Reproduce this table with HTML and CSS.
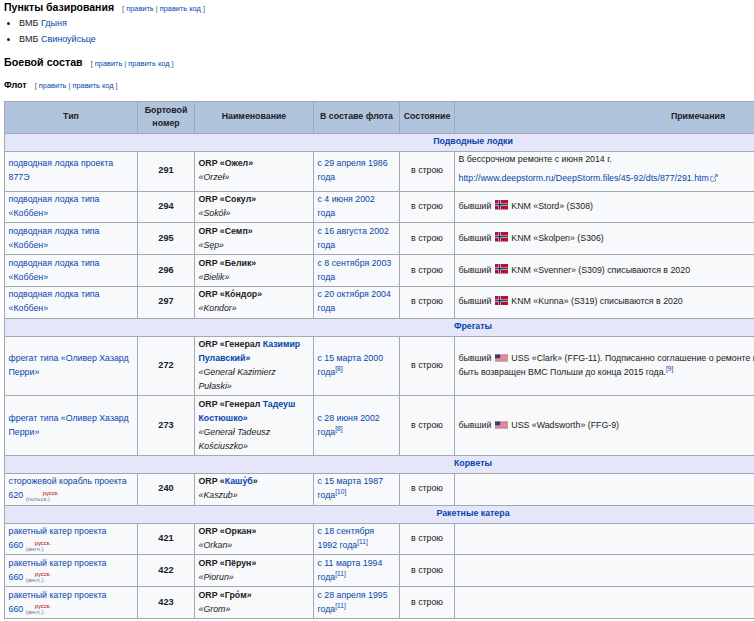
FILE: index.html
```html
<!DOCTYPE html>
<html lang="ru">
<head>
<meta charset="utf-8">
<title>Боевой состав</title>
<link rel="stylesheet" href="styles.css">
</head>
<body>
<h3 class="h3">Пункты базирования<span class="edit">[ <a href="#">править</a> | <a href="#">править код</a> ]</span></h3>
<ul class="bases">
  <li>ВМБ <a href="#">Гдыня</a></li>
  <li>ВМБ <a href="#">Свиноуйсьце</a></li>
</ul>
<h2 class="h2">Боевой состав<span class="edit">[ <a href="#">править</a> | <a href="#">править код</a> ]</span></h2>
<h4 class="h4">Флот<span class="edit">[ <a href="#">править</a> | <a href="#">править код</a> ]</span></h4>

<table class="fleet">
  <colgroup>
    <col class="c-type"><col class="c-num"><col class="c-name"><col class="c-date"><col class="c-state"><col class="c-note">
  </colgroup>
  <thead>
    <tr><th>Тип</th><th>Бортовой номер</th><th>Наименование</th><th class="nowrap">В составе флота</th><th>Состояние</th><th>Примечания</th></tr>
  </thead>
  <tbody>
    <tr class="group"><td colspan="6"><a href="#">Подводные лодки</a></td></tr>
    <tr>
      <td><a href="#">подводная лодка проекта 877Э</a></td>
      <td class="num">291</td>
      <td><b>ORP «Ожел»</b><br><i>«Orzeł»</i></td>
      <td class="date"><a href="#">с 29 апреля 1986 года</a></td>
      <td class="state">в строю</td>
      <td class="note"><p class="p1">В бессрочном ремонте с июня 2014 г.</p><p class="p2"><a href="#" class="ext">http://www.deepstorm.ru/DeepStorm.files/45-92/dts/877/291.htm<svg class="exticon" viewBox="0 0 10 10" width="8" height="8"><path d="M1 3h3M1 3v6h6V6" fill="none" stroke="#7a8aa8" stroke-width="1.1"/><path d="M4.5 5.5L9 1M6 1h3v3" fill="none" stroke="#3366cc" stroke-width="1.1"/></svg></a></p></td>
    </tr>
    <tr>
      <td><a href="#">подводная лодка типа «Коббен»</a></td>
      <td class="num">294</td>
      <td><b>ORP «Сокул»</b><br><i>«Sokół»</i></td>
      <td class="date"><a href="#">с 4 июня 2002 года</a></td>
      <td class="state">в строю</td>
      <td class="note">бывший <svg class="flag" viewBox="0 0 22 16" width="13" height="9.5"><rect width="22" height="16" fill="#ba0c2f"/><rect x="6" width="4" height="16" fill="#fff"/><rect y="6" width="22" height="4" fill="#fff"/><rect x="7" width="2" height="16" fill="#00205b"/><rect y="7" width="22" height="2" fill="#00205b"/></svg> KNM «Stord» (S308)</td>
    </tr>
    <tr>
      <td><a href="#">подводная лодка типа «Коббен»</a></td>
      <td class="num">295</td>
      <td><b>ORP «Семп»</b><br><i>«Sęp»</i></td>
      <td class="date"><a href="#">с 16 августа 2002 года</a></td>
      <td class="state">в строю</td>
      <td class="note">бывший <svg class="flag" viewBox="0 0 22 16" width="13" height="9.5"><rect width="22" height="16" fill="#ba0c2f"/><rect x="6" width="4" height="16" fill="#fff"/><rect y="6" width="22" height="4" fill="#fff"/><rect x="7" width="2" height="16" fill="#00205b"/><rect y="7" width="22" height="2" fill="#00205b"/></svg> KNM «Skolpen» (S306)</td>
    </tr>
    <tr>
      <td><a href="#">подводная лодка типа «Коббен»</a></td>
      <td class="num">296</td>
      <td><b>ORP «Белик»</b><br><i>«Bielik»</i></td>
      <td class="date"><a href="#">с 8 сентября 2003 года</a></td>
      <td class="state">в строю</td>
      <td class="note">бывший <svg class="flag" viewBox="0 0 22 16" width="13" height="9.5"><rect width="22" height="16" fill="#ba0c2f"/><rect x="6" width="4" height="16" fill="#fff"/><rect y="6" width="22" height="4" fill="#fff"/><rect x="7" width="2" height="16" fill="#00205b"/><rect y="7" width="22" height="2" fill="#00205b"/></svg> KNM «Svenner» (S309) списываются в 2020</td>
    </tr>
    <tr>
      <td><a href="#">подводная лодка типа «Коббен»</a></td>
      <td class="num">297</td>
      <td><b>ORP «Ко́ндор»</b><br><i>«Kondor»</i></td>
      <td class="date"><a href="#">с 20 октября 2004 года</a></td>
      <td class="state">в строю</td>
      <td class="note">бывший <svg class="flag" viewBox="0 0 22 16" width="13" height="9.5"><rect width="22" height="16" fill="#ba0c2f"/><rect x="6" width="4" height="16" fill="#fff"/><rect y="6" width="22" height="4" fill="#fff"/><rect x="7" width="2" height="16" fill="#00205b"/><rect y="7" width="22" height="2" fill="#00205b"/></svg> KNM «Kunna» (S319) списываются в 2020</td>
    </tr>
    <tr class="group"><td colspan="6"><a href="#">Фрегаты</a></td></tr>
    <tr>
      <td><a href="#">фрегат типа «Оливер Хазард Перри»</a></td>
      <td class="num">272</td>
      <td><b>ORP «Генерал <a href="#">Казимир</a><br><a href="#">Пулавский»</a></b><br><i>«Generał Kazimierz<br>Pułaski»</i></td>
      <td class="date"><a href="#">с 15 марта 2000 года</a><sup class="ref"><a href="#">[8]</a></sup></td>
      <td class="state">в строю</td>
      <td class="note">бывший <svg class="flag" viewBox="0 0 19 10" width="13" height="8"><rect width="19" height="10" fill="#b22234"/><path d="M0 1.15h19M0 2.69h19M0 4.23h19M0 5.77h19M0 7.31h19M0 8.85h19" stroke="#fff" stroke-width="0.77"/><rect width="7.6" height="5.4" fill="#3c3b6e"/></svg> USS «Clark» (FFG-11). Подписанно соглашение о ремонте и модернизации, фрегат должен<br>быть возвращен ВМС Польши до конца 2015 года.<sup class="ref"><a href="#">[9]</a></sup></td>
    </tr>
    <tr>
      <td><a href="#">фрегат типа «Оливер Хазард Перри»</a></td>
      <td class="num">273</td>
      <td><b>ORP «Генерал <a href="#">Тадеуш</a><br><a href="#">Костюшко»</a></b><br><i>«Generał Tadeusz<br>Kościuszko»</i></td>
      <td class="date"><a href="#">с 28 июня 2002 года</a><sup class="ref"><a href="#">[8]</a></sup></td>
      <td class="state">в строю</td>
      <td class="note">бывший <svg class="flag" viewBox="0 0 19 10" width="13" height="8"><rect width="19" height="10" fill="#b22234"/><path d="M0 1.15h19M0 2.69h19M0 4.23h19M0 5.77h19M0 7.31h19M0 8.85h19" stroke="#fff" stroke-width="0.77"/><rect width="7.6" height="5.4" fill="#3c3b6e"/></svg> USS «Wadsworth» (FFG-9)</td>
    </tr>
    <tr class="group"><td colspan="6"><a href="#">Корветы</a></td></tr>
    <tr>
      <td><a href="#">сторожевой корабль проекта</a> <span class="nowrap"><a href="#">620</a> <span class="iw"><a href="#" class="iw-ru iw-pl">русск.</a><a href="#" class="iw-lang">(польск.)</a></span></span></td>
      <td class="num">240</td>
      <td><b>ORP «<a href="#">Кашу́б</a>»</b><br><i>«Kaszub»</i></td>
      <td class="date"><a href="#">с 15 марта 1987 года</a><sup class="ref"><a href="#">[10]</a></sup></td>
      <td class="state">в строю</td>
      <td class="note"></td>
    </tr>
    <tr class="group"><td colspan="6"><a href="#">Ракетные катера</a></td></tr>
    <tr>
      <td><a href="#">ракетный катер проекта</a> <span class="nowrap"><a href="#">660</a> <span class="iw"><a href="#" class="iw-ru iw-en">русск.</a><a href="#" class="iw-lang">(англ.)</a></span></span></td>
      <td class="num">421</td>
      <td><b>ORP «Оркан»</b><br><i>«Orkan»</i></td>
      <td class="date"><a href="#">с 18 сентября 1992 года</a><sup class="ref"><a href="#">[11]</a></sup></td>
      <td class="state">в строю</td>
      <td class="note"></td>
    </tr>
    <tr>
      <td><a href="#">ракетный катер проекта</a> <span class="nowrap"><a href="#">660</a> <span class="iw"><a href="#" class="iw-ru iw-en">русск.</a><a href="#" class="iw-lang">(англ.)</a></span></span></td>
      <td class="num">422</td>
      <td><b>ORP «Пёрун»</b><br><i>«Piorun»</i></td>
      <td class="date"><a href="#">с 11 марта 1994 года</a><sup class="ref"><a href="#">[11]</a></sup></td>
      <td class="state">в строю</td>
      <td class="note"></td>
    </tr>
    <tr>
      <td><a href="#">ракетный катер проекта</a> <span class="nowrap"><a href="#">660</a> <span class="iw"><a href="#" class="iw-ru iw-en">русск.</a><a href="#" class="iw-lang">(англ.)</a></span></span></td>
      <td class="num">423</td>
      <td><b>ORP «Гро́м»</b><br><i>«Grom»</i></td>
      <td class="date"><a href="#">с 28 апреля 1995 года</a><sup class="ref"><a href="#">[11]</a></sup></td>
      <td class="state">в строю</td>
      <td class="note"></td>
    </tr>
  </tbody>
</table>
</body>
</html>
```
FILE: styles.css
```css
html {
  overflow: hidden;
  background: #fff;
}
body {
  margin: 0;
  padding: 0 4px;
  font-family: "Liberation Sans", Arial, sans-serif;
  color: #202122;
}
a {
  color: #0645ad;
  text-decoration: none;
}
.h3, .h2, .h4 {
  margin: 0;
  font-weight: bold;
  color: #000;
}
.h3 {
  font-size: 10.5px;
  line-height: 14px;
  height: 14px;
}
.h2 {
  margin-top: 8px;
  font-size: 10.7px;
  line-height: 15px;
  height: 15px;
}
.h4 {
  margin-top: 9px;
  font-size: 9px;
  line-height: 13px;
  height: 13px;
}
.edit {
  margin-left: 8px;
  font-size: 7.4px;
  line-height: 1;
  font-weight: normal;
  color: #54595d;
}
.bases {
  margin: 1px 0 0;
  padding-left: 15px;
  font-size: 9px;
  line-height: 16px;
}
.bases li {
  height: 16px;
}
.fleet {
  margin-top: 9px;
  width: 938px;
  table-layout: fixed;
  border-collapse: collapse;
  background: #f8f9fa;
  font-size: 8.8px;
  line-height: 13.9px;
}
.c-type { width: 133px; }
.c-num { width: 57px; }
.c-name { width: 119px; }
.c-date { width: 86px; }
.c-state { width: 55px; }
.fleet th,
.fleet td {
  border: 1px solid #a2a9b1;
  padding: 1.5px 3.5px;
  vertical-align: middle;
  text-align: left;
}
.fleet th {
  background: #b0c4de;
  font-weight: bold;
  text-align: center;
}
.nowrap {
  white-space: nowrap;
}
.group td {
  background: #e6e6fa;
  font-weight: bold;
  text-align: center;
}
.fleet td.num {
  text-align: center;
  font-weight: bold;
  font-size: 9.2px;
}
.fleet td.state {
  text-align: center;
}
.fleet td.date {
  padding-right: 6px;
}
.p1 {
  margin: 0;
}
.p2 {
  margin: 5px 0 3px;
}
.exticon {
  margin-left: 1px;
  vertical-align: -1px;
}
.flag {
  vertical-align: -1px;
  margin: 0 1px;
}
.ref {
  font-size: 6.6px;
  line-height: 0;
  vertical-align: 4px;
}
.iw {
  display: inline-block;
  vertical-align: middle;
  font-size: 6px;
  line-height: 6px;
}
.iw a {
  display: block;
}
.iw-ru {
  color: #ba0000;
}
.iw-pl {
  padding-left: 17px;
}
.iw-en {
  padding-left: 9px;
}
.iw-lang {
  color: #6b7898;
}
```
